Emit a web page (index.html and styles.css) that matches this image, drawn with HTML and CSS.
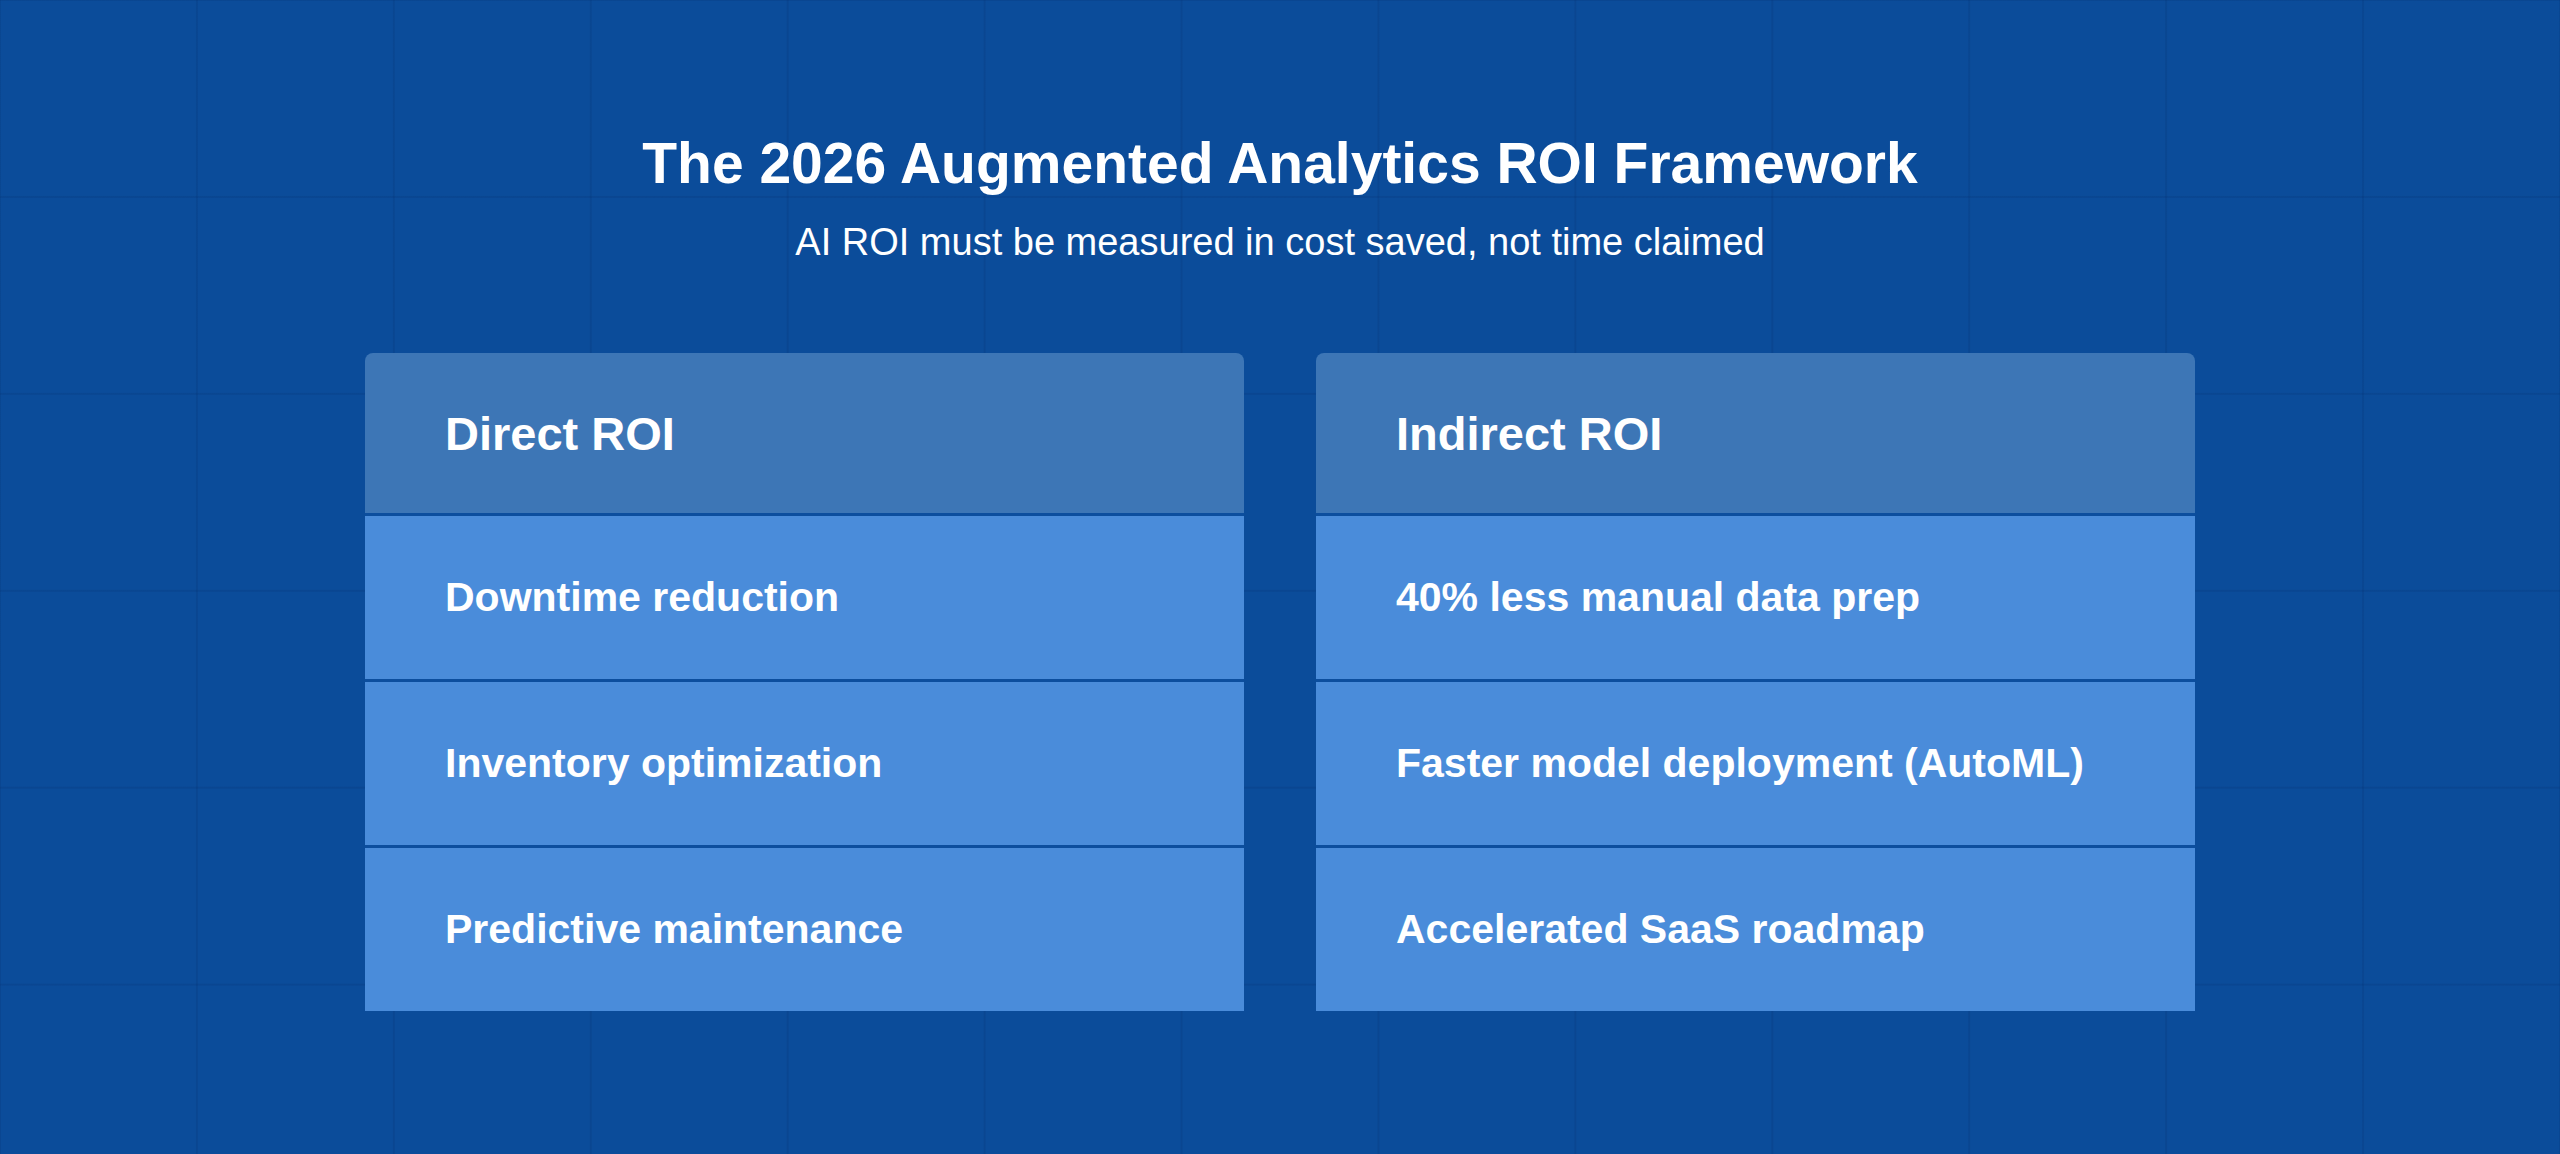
FILE: index.html
```html
<!DOCTYPE html>
<html lang="en">
<head>
<meta charset="utf-8">
<title>The 2026 Augmented Analytics ROI Framework</title>
<link rel="stylesheet" href="styles.css">
</head>
<body>
<main class="page">
  <h1 class="title">The 2026 Augmented Analytics ROI Framework</h1>
  <p class="subtitle">AI ROI must be measured in cost saved, not time claimed</p>
  <section class="cards">
    <div class="card">
      <div class="card-head">Direct ROI</div>
      <div class="card-row">Downtime reduction</div>
      <div class="card-row">Inventory optimization</div>
      <div class="card-row">Predictive maintenance</div>
    </div>
    <div class="card">
      <div class="card-head">Indirect ROI</div>
      <div class="card-row">40% less manual data prep</div>
      <div class="card-row">Faster model deployment (AutoML)</div>
      <div class="card-row">Accelerated SaaS roadmap</div>
    </div>
  </section>
</main>
</body>
</html>
```

FILE: styles.css
```css
html, body {
  margin: 0;
  padding: 0;
}

body {
  width: 2560px;
  height: 1154px;
  overflow: hidden;
  background-color: #0b4c9a;
  background-image:
    linear-gradient(to right, rgba(3, 40, 100, 0.16) 2px, transparent 2px),
    linear-gradient(to bottom, rgba(3, 40, 100, 0.16) 2px, transparent 2px);
  background-size: 196.923px 196.923px;
  background-position: 195.923px 195.923px;
  font-family: "Liberation Sans", Arial, sans-serif;
  color: #ffffff;
}

.page {
  display: flex;
  flex-direction: column;
  align-items: center;
  padding-top: 135px;
}

.title {
  margin: 0;
  font-size: 57px;
  line-height: 57px;
  font-weight: 700;
  letter-spacing: 0;
}

.subtitle {
  margin: 31px 0 0;
  font-size: 38px;
  line-height: 38px;
  font-weight: 400;
}

.cards {
  display: flex;
  gap: 72px;
  margin-top: 92px;
}

.card {
  width: 879px;
  display: flex;
  flex-direction: column;
  border-radius: 8px 8px 0 0;
  overflow: hidden;
}

.card-head {
  height: 160px;
  display: flex;
  align-items: center;
  padding-left: 80px;
  background: #3d76b6;
  font-size: 47px;
  font-weight: 700;
}

.card-row {
  height: 163px;
  display: flex;
  align-items: center;
  padding-left: 80px;
  background: #4a8cda;
  border-top: 3px solid #0c4e9e;
  font-size: 41px;
  font-weight: 700;
}
```
